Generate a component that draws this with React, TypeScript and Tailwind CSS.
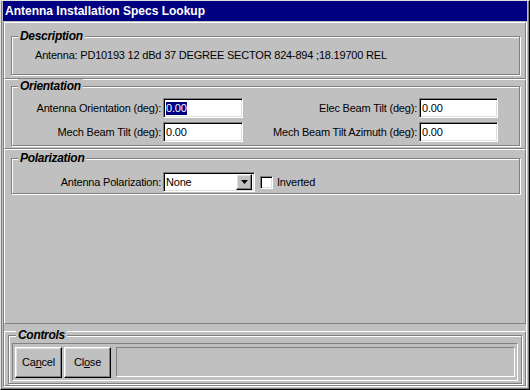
import React from "react";

const etched = "border border-[#808080] shadow-[inset_1px_1px_0_#fff,1px_1px_0_#fff]";
const raisedPanel = "border border-t-white border-l-white border-b-[#808080] border-r-[#808080]";
const sunkenField =
  "border border-t-[#808080] border-l-[#808080] border-b-white border-r-white shadow-[inset_1px_1px_0_#000,inset_-1px_-1px_0_#dfdfdf] bg-white";
const raisedBtn =
  "border border-t-white border-l-white border-b-black border-r-black shadow-[inset_-1px_-1px_0_#808080,inset_1px_1px_0_#dfdfdf]";

const GroupLabel = ({ text, left }: { text: string; left: string }) => (
  <span
    className={`absolute -top-[8px] ${left} bg-[#c0c0c0] px-[2px] text-[12px] leading-[14px] font-bold italic tracking-[-0.3px] text-black`}
  >
    {text}
  </span>
);

const Field = ({ value, width, selected }: { value: string; width: string; selected?: boolean }) => (
  <div className={`${sunkenField} ${width} h-[20px] flex items-center pl-[2px]`}>
    {selected ? <span className="bg-[#000080] text-white leading-[13px]">{value}</span> : <span>{value}</span>}
  </div>
);

const Row = ({ label, children, labelW }: { label: string; children: React.ReactNode; labelW: string }) => (
  <div className="flex items-center">
    <div className={`${labelW} text-right pr-[2px]`}>{label}</div>
    {children}
  </div>
);

export default function App() {
  return (
    <div
      className="w-[530px] h-[390px] flex flex-col bg-[#c0c0c0] border border-t-[#dfdfdf] border-l-[#dfdfdf] border-r-black border-b-black text-[11px] tracking-[-0.2px] text-black"
      style={{ fontFamily: '"Liberation Sans", Arial, sans-serif' }}
    >
      <div className="flex flex-col flex-1 border-l border-r border-b border-[#808080] px-px pb-px">
        {/* title bar */}
        <div className="h-[20px] bg-[#000080] flex items-center pl-[2px] text-white text-[12px] font-bold tracking-normal">
          Antenna Installation Specs Lookup
        </div>

        <div className="flex flex-col flex-1 mt-px border-l border-r border-b border-l-[#808080] border-r-white border-b-white">
          {/* Description */}
          <div className={`${raisedPanel} h-[57px] pt-[13px] pl-[6px] pr-[5px]`}>
            <div className={`${etched} relative h-[39px] pt-[10px] pl-[23px]`}>
              <GroupLabel text="Description" left="left-[6px]" />
              Antenna: PD10193 12 dBd 37 DEGREE SECTOR 824-894 ;18.19700 REL
            </div>
          </div>

          {/* Orientation */}
          <div className={`${raisedPanel} h-[70px] pt-[6px] pl-[6px] pr-[5px]`}>
            <div className={`${etched} relative h-[60px] pt-[11px] flex flex-col gap-[4px]`}>
              <GroupLabel text="Orientation" left="left-[6px]" />
              <div className="flex">
                <Row label="Antenna Orientation (deg):" labelW="w-[151px]">
                  <Field value="0.00" width="w-[80px]" selected />
                </Row>
                <Row label="Elec Beam Tilt (deg):" labelW="w-[176px]">
                  <Field value="0.00" width="w-[79px]" />
                </Row>
              </div>
              <div className="flex">
                <Row label="Mech Beam Tilt (deg):" labelW="w-[151px]">
                  <Field value="0.00" width="w-[80px]" />
                </Row>
                <Row label="Mech Beam Tilt Azimuth (deg):" labelW="w-[176px]">
                  <Field value="0.00" width="w-[79px]" />
                </Row>
              </div>
            </div>
          </div>

          {/* Polarization */}
          <div className={`${raisedPanel} h-[175px] pt-[8px] pl-[6px] pr-[5px]`}>
            <div className={`${etched} relative h-[36px] pt-[12px] flex items-center`}>
              <GroupLabel text="Polarization" left="left-[6px]" />
              <Row label="Antenna Polarization:" labelW="w-[151px]">
                <div className={`${sunkenField} w-[92px] h-[20px] flex items-center pl-[2px] pr-[2px]`}>
                  <span className="flex-1">None</span>
                  <div className={`${raisedBtn} bg-[#c0c0c0] w-[16px] h-[16px] flex items-center justify-center`}>
                    <svg width="7" height="4" viewBox="0 0 7 4">
                      <path d="M0 0h7L3.5 4z" fill="#000" />
                    </svg>
                  </div>
                </div>
                <div className={`${sunkenField} w-[13px] h-[13px] ml-[5px]`} />
                <span className="ml-[4px]">Inverted</span>
              </Row>
            </div>
          </div>

          <div className="h-[7px]" />

          {/* Controls */}
          <div className={`${raisedPanel} flex-1 pt-[3px] pl-[3px] pr-[3px] pb-[1px] flex`}>
            <div className={`${etched} relative flex-1 pt-[7px] px-[3px] pb-[2px] flex`}>
              <GroupLabel text="Controls" left="left-[7px]" />
              <div className="flex-1 border border-t-[#808080] border-l-[#808080] border-b-white border-r-white flex items-center gap-[2px] pl-[2px] pr-[2px]">
                <button className={`${raisedBtn} bg-[#c0c0c0] w-[47px] h-[31px]`}>
                  Ca<span className="underline">n</span>cel
                </button>
                <button className={`${raisedBtn} bg-[#c0c0c0] w-[47px] h-[31px]`}>
                  Cl<span className="underline">o</span>se
                </button>
                <div className="flex-1 h-[30px] ml-[3px] border border-t-[#808080] border-l-[#808080] border-b-white border-r-white" />
              </div>
            </div>
          </div>
        </div>
      </div>
    </div>
  );
}
